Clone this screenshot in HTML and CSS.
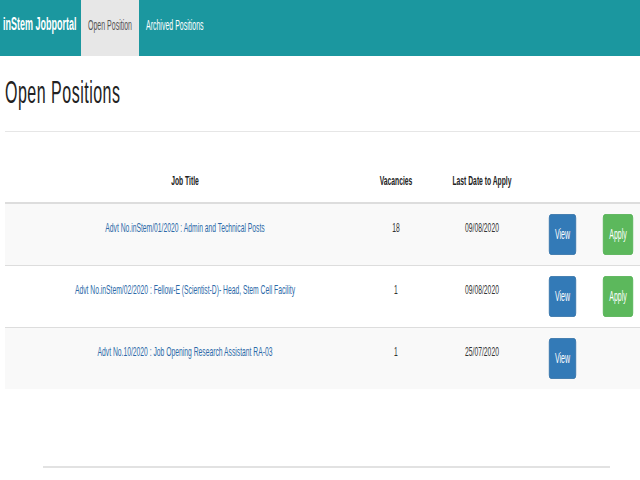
FILE: index.html
```
<!DOCTYPE html>
<html lang="en">
<head>
	<meta charset="UTF-8">
	<title>inStem Jobportal</title>
	<link rel="stylesheet" href="styles.css">
</head>
<body>
<div class="frame">
<div class="page">
	<nav class="navbar">
		<a class="brand" href="#">inStem Jobportal</a>
		<a class="tab active" href="#">Open Position</a>
		<a class="tab" href="#">Archived Positions</a>
	</nav>

	<h1 class="page-title">Open Positions</h1>
	<hr class="rule">

	<table class="jobs">
		<colgroup>
			<col class="c-title"><col class="c-vac"><col class="c-date"><col class="c-view"><col class="c-apply">
		</colgroup>
		<thead>
			<tr><th>Job Title</th><th>Vacancies</th><th>Last Date to Apply</th><th></th><th></th></tr>
		</thead>
		<tbody>
			<tr>
				<td class="txt"><a href="#">Advt No.inStem/01/2020 : Admin and Technical Posts</a></td>
				<td class="txt">18</td>
				<td class="txt">09/08/2020</td>
				<td><a class="btn view" href="#">View</a></td>
				<td class="apply-cell"><a class="btn apply" href="#">Apply</a></td>
			</tr>
			<tr>
				<td class="txt"><a href="#">Advt No.inStem/02/2020 : Fellow-E (Scientist-D)- Head, Stem Cell Facility</a></td>
				<td class="txt">1</td>
				<td class="txt">09/08/2020</td>
				<td><a class="btn view" href="#">View</a></td>
				<td class="apply-cell"><a class="btn apply" href="#">Apply</a></td>
			</tr>
			<tr>
				<td class="txt"><a href="#">Advt No.10/2020 : Job Opening Research Assistant RA-03</a></td>
				<td class="txt">1</td>
				<td class="txt">25/07/2020</td>
				<td><a class="btn view" href="#">View</a></td>
				<td class="apply-cell"></td>
			</tr>
		</tbody>
	</table>

	<footer class="footer"><hr class="rule"></footer>
</div>
</div>
</body>
</html>
```

FILE: styles.css
```
html, body {
	margin: 0;
	overflow: hidden;
	background: #fff;
}

.frame {
	width: 640px;
	height: 480px;
	overflow: hidden;
}

/* the page is laid out at double width and squeezed to fit the window */
.page {
	width: 1280px;
	transform: scaleX(0.5);
	transform-origin: 0 0;
	font-family: "Liberation Sans", Arial, sans-serif;
	font-size: 14px;
	line-height: 20px;
	color: #333;
}

a {
	color: #2c69a8;
	text-decoration: none;
}

/* navbar */

.navbar {
	display: flex;
	height: 56px;
	background: #1b979f;
	white-space: nowrap;
}

.navbar a {
	display: block;
	padding: 15px 14px 0;
	color: #fff;
}

.navbar .brand {
	width: 162px;
	box-sizing: border-box;
	padding: 14px 0 0 6px;
	font-size: 18px;
	font-weight: bold;
}

.navbar .tab.active {
	background: #e7e7e7;
	color: #555;
}

/* heading */

.page-title {
	margin: 20px 0 0;
	padding-left: 10px;
	font-size: 32px;
	font-weight: normal;
	letter-spacing: 1px;
	line-height: 33px;
	color: #222;
}

.rule {
	margin: 22px 0 31px 10px;
	border: 0;
	border-top: 1px solid #e6e6e6;
}

/* jobs table */

.jobs {
	margin-left: 10px;
	width: 1270px;
	table-layout: fixed;
	border-collapse: collapse;
	font-size: 13.5px;
}

.c-title { width: 720px; }
.c-vac { width: 124px; }
.c-date { width: 220px; }
.c-view { width: 102px; }
.c-apply { width: 104px; }

.jobs th {
	padding: 8px 8px 11px;
	border-bottom: 2px solid #ddd;
	text-align: center;
	font-weight: bold;
	color: #222;
}

.jobs td {
	padding: 10px 8px;
	border-top: 1px solid #ddd;
	text-align: center;
	vertical-align: top;
	color: #333;
}

.jobs td.txt {
	padding-top: 14px;
}

.jobs td.apply-cell {
	padding-left: 16px;
	padding-right: 0;
}

.jobs tbody tr:nth-child(odd) {
	background: #f9f9f9;
}

.btn {
	display: inline-block;
	height: 41px;
	line-height: 39px;
	padding: 0 11px;
	box-sizing: border-box;
	border: 1px solid;
	border-radius: 4px;
	font-size: 14px;
	color: #fff;
}

.btn.view {
	background: #337ab7;
	border-color: #2e6da4;
}

.btn.apply {
	background: #5cb85c;
	border-color: #4cae4c;
}

/* footer */

.footer {
	padding-top: 77px;
}

.footer .rule {
	margin: 0 0 0 86px;
	width: 1134px;
	border-top: 2px solid #e2e2e2;
}
```
